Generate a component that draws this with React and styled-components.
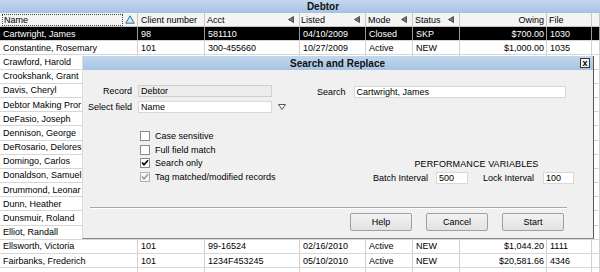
import React from 'react';
import styled, { createGlobalStyle } from 'styled-components';

const Global = createGlobalStyle`
  html, body { margin: 0; padding: 0; background: #fff; }
  body { font-family: "Liberation Sans", Arial, sans-serif; font-size: 9px; color: #000; }
  * { box-sizing: border-box; }
`;

const COLS = '138px 67px 95px 66px 47px 47px 87px 45px 8px';

const Screen = styled.div`
  position: relative;
  width: 600px;
  height: 272px;
  overflow: hidden;
  background: #fff;
`;

const TitleBar = styled.div`
  height: 13px;
  background: linear-gradient(#c2d7ee, #a6c3e3);
  font-weight: bold;
  font-size: 10px;
  line-height: 13px;
  text-align: center;
  padding-left: 46px;
  color: #111;
`;

const HeaderRow = styled.div`
  display: grid;
  grid-template-columns: ${COLS};
  height: 14px;
  background: #f4f4f4;
  border-bottom: 1px solid #c4c4c4;
`;

const HeaderCell = styled.div`
  display: flex;
  align-items: center;
  justify-content: ${p => (p.$right ? 'flex-end' : 'flex-start')};
  padding: 0 2px 0 ${p => (p.$pl ?? 3)}px;
  border-right: 1px solid #c8c8c8;
  white-space: nowrap;
  overflow: hidden;
`;

const FocusBox = styled.div`
  flex: 1;
  height: 12px;
  border: 1px dotted #444;
  padding-left: 1px;
  line-height: 10px;
  margin-right: 2px;
`;

const ColArrow = styled.svg`
  margin-left: auto;
  margin-right: 3px;
  flex: none;
`;

const Row = styled.div`
  display: grid;
  grid-template-columns: ${COLS};
  height: 14.2px;
  border-bottom: 1px solid #d6d6d6;
  background: ${p => (p.$selected ? '#000' : '#fff')};
  color: ${p => (p.$selected ? '#fff' : '#000')};
`;

const Cell = styled.div`
  display: flex;
  align-items: center;
  justify-content: ${p => (p.$right ? 'flex-end' : 'flex-start')};
  padding: 0 2px 0 3px;
  border-right: 1px solid ${p => (p.$selected ? '#9a9a9a' : '#d0d0d0')};
  white-space: nowrap;
  overflow: hidden;
`;

/* ---------- dialog ---------- */

const Dialog = styled.div`
  position: absolute;
  left: 82px;
  top: 56px;
  width: 512px;
  height: 183px;
  background: #f0f0f0;
  border-right: 1px solid #555;
  border-bottom: 1px solid #8a8a8a;
  border-left: 1px solid #dcdcdc;
  display: flex;
  flex-direction: column;
`;

const DialogTitle = styled.div`
  height: 14px;
  flex: none;
  display: flex;
  align-items: center;
  background: linear-gradient(#c2d7ee, #a6c3e3);
  padding-left: 12px;
`;

const DialogTitleText = styled.div`
  flex: 1;
  text-align: center;
  font-weight: bold;
  font-size: 10px;
  color: #111;
`;

const CloseBtn = styled.div`
  width: 10px;
  height: 10px;
  margin-right: 3px;
  border: 1px solid #333;
  background: #f2f2f2;
  display: flex;
  align-items: center;
  justify-content: center;
  font-size: 9px;
  font-weight: bold;
  line-height: 8px;
`;

const Body = styled.div`
  flex: 1;
  display: flex;
  flex-direction: column;
  padding: 15px 19px 0 0;
`;

const TopSection = styled.div`
  display: flex;
  align-items: flex-start;
`;

const FieldGrid = styled.div`
  display: grid;
  grid-template-columns: 49px 134px 12px;
  grid-auto-rows: 12px;
  column-gap: 6px;
  row-gap: 4px;
  align-items: center;
`;

const Label = styled.div`
  text-align: ${p => (p.$left ? 'left' : 'right')};
  white-space: nowrap;
  margin-left: ${p => p.$ml || 0}px;
`;

const Input = styled.div`
  height: 12px;
  width: ${p => (p.$w ? `${p.$w}px` : 'auto')};
  margin-left: ${p => p.$ml || 0}px;
  border: 1px solid ${p => (p.$disabled ? '#cfcfcf' : '#d8d8d8')};
  background: ${p => (p.$disabled ? '#ececec' : '#fff')};
  padding-left: 2px;
  line-height: 10px;
  white-space: nowrap;
  overflow: hidden;
`;

const SearchGroup = styled.div`
  display: flex;
  align-items: center;
  margin-left: 27px;
  margin-top: 1px;
  gap: 8px;
`;

const MiddleSection = styled.div`
  display: flex;
  margin-top: 16px;
`;

const CheckList = styled.div`
  display: flex;
  flex-direction: column;
  margin-left: 57px;
`;

const CheckRow = styled.div`
  display: flex;
  align-items: center;
  height: 13.7px;
  gap: 5px;
  color: #000;
`;

const Box = styled.div`
  width: 10px;
  height: 10px;
  border: 1px solid ${p => (p.$disabled ? '#b0b0b0' : '#8b8b8b')};
  background: ${p => (p.$disabled ? '#f6f6f6' : '#fff')};
  display: flex;
  align-items: center;
  justify-content: center;
`;

const Perf = styled.div`
  margin-left: auto;
  align-self: flex-end;
  display: flex;
  flex-direction: column;
  align-items: center;
  gap: 3px;
`;

const PerfHead = styled.div`
  padding-left: 6px;
  letter-spacing: 0.1px;
`;

const PerfRow = styled.div`
  display: flex;
  align-items: center;
`;

const Separator = styled.div`
  margin: 23px 7px 0 7px;
  border-top: 1px solid #a8a8a8;
  border-bottom: 1px solid #fff;
`;

const ButtonRow = styled.div`
  display: flex;
  justify-content: flex-end;
  gap: 14px;
  margin-top: 4px;
  padding-right: 10px;
`;

const Button = styled.div`
  width: 62px;
  height: 18px;
  border: 1px solid #a0a0a0;
  border-radius: 2px;
  background: linear-gradient(#f2f2f2, #e2e2e2);
  display: flex;
  align-items: center;
  justify-content: center;
`;

const Check = ({ checked, disabled, children }) => (
  <CheckRow>
    <Box $disabled={disabled}>
      {checked && (
        <svg width="8" height="8" viewBox="0 0 8 8">
          <path d="M1 3.5 L3 5.8 L7 1.2" fill="none" stroke={disabled ? '#9a9a9a' : '#000'} strokeWidth="1.6" />
        </svg>
      )}
    </Box>
    <span>{children}</span>
  </CheckRow>
);

const LeftArrow = () => (
  <ColArrow width="6" height="7" viewBox="0 0 6 7">
    <polygon points="5.5,0.5 5.5,6.5 0.5,3.5" fill="#777" stroke="#333" strokeWidth="0.8" />
  </ColArrow>
);

const rows = [
  { name: 'Cartwright, James', client: '98', acct: '581110', listed: '04/10/2009', mode: 'Closed', status: 'SKP', owing: '$700.00', file: '1030', selected: true },
  { name: 'Constantine, Rosemary', client: '101', acct: '300-455660', listed: '10/27/2009', mode: 'Active', status: 'NEW', owing: '$1,000.00', file: '1035' },
  { name: 'Crawford, Harold' },
  { name: 'Crookshank, Grant' },
  { name: 'Davis, Cheryl' },
  { name: 'Debtor Making Pror' },
  { name: 'DeFasio, Joseph' },
  { name: 'Dennison, George' },
  { name: 'DeRosario, Delores' },
  { name: 'Domingo, Carlos' },
  { name: 'Donaldson, Samuel' },
  { name: 'Drummond, Leonar' },
  { name: 'Dunn, Heather' },
  { name: 'Dunsmuir, Roland' },
  { name: 'Elliot, Randall' },
  { name: 'Ellsworth, Victoria', client: '101', acct: '99-16524', listed: '02/16/2010', mode: 'Active', status: 'NEW', owing: '$1,044.20', file: '1111' },
  { name: 'Fairbanks, Frederich', client: '101', acct: '1234F453245', listed: '05/10/2010', mode: 'Active', status: 'NEW', owing: '$20,581.66', file: '4346' },
  { name: '' },
];

export default function App() {
  return (
    <Screen>
      <Global />
      <TitleBar>Debtor</TitleBar>
      <HeaderRow>
        <HeaderCell $pl={2}>
          <FocusBox>Name</FocusBox>
          <svg width="10" height="9" viewBox="0 0 10 9">
            <polygon points="5,0.8 9.2,8.2 0.8,8.2" fill="#c4ecf8" stroke="#2b5d8c" strokeWidth="0.9" />
          </svg>
        </HeaderCell>
        <HeaderCell>Client number</HeaderCell>
        <HeaderCell $pl={2}>Acct<LeftArrow /></HeaderCell>
        <HeaderCell $pl={1}>Listed<LeftArrow /></HeaderCell>
        <HeaderCell $pl={2}>Mode<LeftArrow /></HeaderCell>
        <HeaderCell $pl={2}>Status<LeftArrow /></HeaderCell>
        <HeaderCell $right>Owing</HeaderCell>
        <HeaderCell $pl={2}>File</HeaderCell>
        <HeaderCell />
      </HeaderRow>
      {rows.map((r, i) => (
        <Row key={i} $selected={r.selected}>
          <Cell $selected={r.selected}>{r.name}</Cell>
          <Cell $selected={r.selected}>{r.client}</Cell>
          <Cell $selected={r.selected}>{r.acct}</Cell>
          <Cell $selected={r.selected}>{r.listed}</Cell>
          <Cell $selected={r.selected}>{r.mode}</Cell>
          <Cell $selected={r.selected}>{r.status}</Cell>
          <Cell $selected={r.selected} $right>{r.owing}</Cell>
          <Cell $selected={r.selected}>{r.file}</Cell>
          <Cell $selected={r.selected} />
        </Row>
      ))}

      <Dialog>
        <DialogTitle>
          <DialogTitleText>Search and Replace</DialogTitleText>
          <CloseBtn>x</CloseBtn>
        </DialogTitle>
        <Body>
          <TopSection>
            <FieldGrid>
              <Label>Record</Label>
              <Input $disabled>Debtor</Input>
              <span />
              <Label>Select field</Label>
              <Input>Name</Input>
              <svg width="8" height="6" viewBox="0 0 8 6">
                <polygon points="0.5,0.5 7.5,0.5 4,5.5" fill="#fff" stroke="#444" strokeWidth="0.9" />
              </svg>
            </FieldGrid>
            <SearchGroup>
              <Label>Search</Label>
              <Input $w={212}>Cartwright, James</Input>
            </SearchGroup>
          </TopSection>

          <MiddleSection>
            <CheckList>
              <Check>Case sensitive</Check>
              <Check>Full field match</Check>
              <Check checked>Search only</Check>
              <Check checked disabled>Tag matched/modified records</Check>
            </CheckList>
            <Perf>
              <PerfHead>PERFORMANCE VARIABLES</PerfHead>
              <PerfRow>
                <Label>Batch Interval</Label>
                <Input $w={32} $ml={8}>500</Input>
                <Label $ml={15}>Lock Interval</Label>
                <Input $w={31} $ml={9}>100</Input>
              </PerfRow>
            </Perf>
          </MiddleSection>

          <Separator />
          <ButtonRow>
            <Button>Help</Button>
            <Button>Cancel</Button>
            <Button>Start</Button>
          </ButtonRow>
        </Body>
      </Dialog>
    </Screen>
  );
}
